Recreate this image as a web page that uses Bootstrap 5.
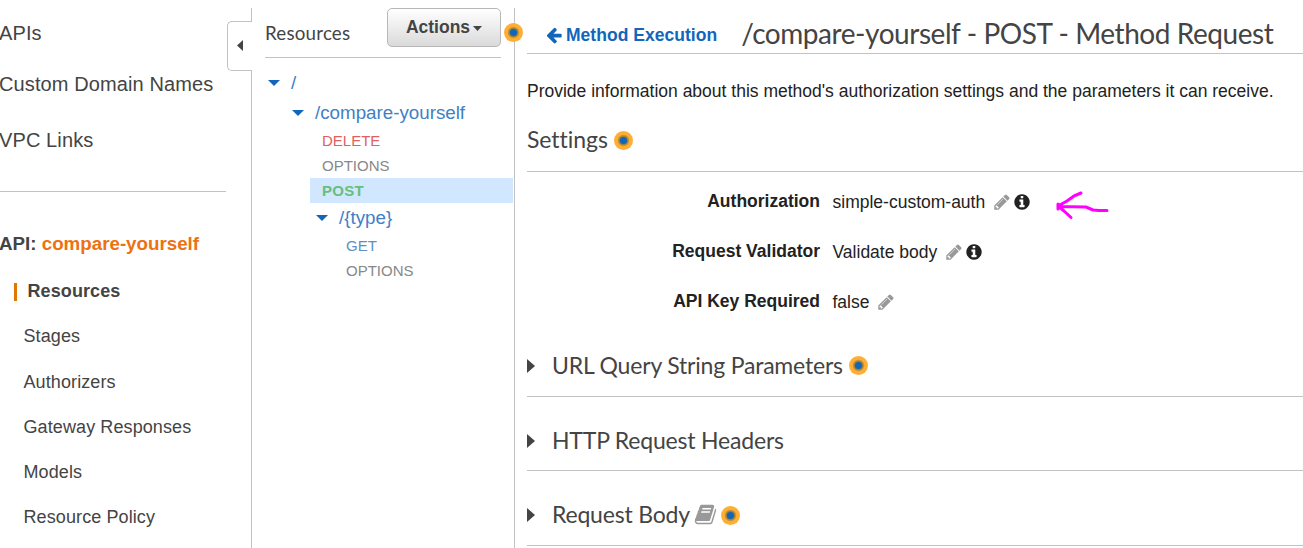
<!DOCTYPE html>
<html lang="en">
<head>
<meta charset="utf-8">
<meta name="viewport" content="width=device-width, initial-scale=1">
<title>Method Request</title>
<link href="https://cdn.jsdelivr.net/npm/bootstrap@5.3.0/dist/css/bootstrap.min.css" rel="stylesheet">
<style>
body{font-family:"Liberation Sans",Arial,sans-serif;font-size:17.5px;color:#222;background:#fff;height:548px;overflow:hidden}
.frame{height:548px;padding-top:8px}
.side{width:252px;border-right:1px solid #c2c2c2;color:#444}
.tree{width:263px;border-right:1px solid #c2c2c2;padding-left:13px}
.side a,.tree a,.pane a{text-decoration:none;white-space:nowrap}
.side a{color:#444}
.top-link{font-size:20px;line-height:24px;letter-spacing:.11px;margin-left:-1px}
.side-rule{width:226px;border-top:1px solid #c2c2c2}
.api-name{font-size:18.75px;line-height:24px;margin-left:-1px;white-space:nowrap}
.api-name a{color:#ec7211}
.sub-link{height:45.25px;line-height:45.25px;padding-left:23.5px;font-size:18px;letter-spacing:.1px}
.sub-link.current{padding-left:14px;display:flex;align-items:center}
.sub-link.current::before{content:"";width:3px;height:18px;background:#e07700;margin-right:10.5px}
.fold{left:227px;top:13px;width:25px;height:50px;background:#fff;border:1px solid #c2c2c2;border-right:0;border-radius:5px 0 0 5px;padding-left:12px}
.lato{font-family:Lato,sans-serif;color:#444}
.tree-head{width:236px;height:50px;border-bottom:1px solid #c2c2c2;margin-bottom:10px}
.tree-title{font-size:18.75px;line-height:24px;margin-top:13px;letter-spacing:.2px}
.btn-actions{width:114px;height:39px;padding:0;font-size:17.5px;font-weight:700;color:#444;border:1px solid #b7b7b7;border-radius:5px;background:linear-gradient(#fff,#dadada);line-height:36px}
.btn-actions:hover{color:#444}
.node{height:30px;font-size:18.75px}
.node a{color:#4180c5}
.node svg{margin-right:12px;flex:none}
.verb{height:25px;line-height:25px;font-size:15px;color:#888;padding-left:12px}
.verb a{color:inherit}
.ml-45{margin-left:45px}.ml-69{margin-left:69px}
.chosen{background:#d0e7ff;width:203px;letter-spacing:.3px}
.dot{width:19px;height:19px;flex:none}
.dot-head{left:504px;top:23px}
.pane{padding-left:12px;min-width:0}
.pane-head{height:46px;border-bottom:1px solid #c2c2c2;padding-left:18px}
.back{color:#1166bb;font-weight:700;line-height:24px;margin-top:15px;letter-spacing:.03px}
.page-title{font-size:28px;line-height:34px;margin:8px 0 0 24px;white-space:nowrap;letter-spacing:-.44px}
.intro{line-height:24px;margin:25px 0 0;white-space:nowrap}
.sect-title{font-size:23px;line-height:30px;margin:0;white-space:nowrap;letter-spacing:-.19px}
.settings-head{height:69px;padding-top:21px;border-bottom:1px solid #c2c2c2}
.field{height:50px}
.field dt{width:293px;text-align:right;margin-right:12.5px;line-height:24px}
.field dd{margin:1px 0 0;line-height:24px;white-space:nowrap}
.panel-row{border-bottom:1px solid #c2c2c2}
.panel-row .sect-title{margin-bottom:2px}
.panel-row .tri{margin-right:17px}
.note{left:1054px;top:188px}
svg{display:block}
</style>
</head>
<body>
<svg width="0" height="0" class="position-absolute">
  <symbol id="dot" viewBox="0 0 19 19"><circle cx="9.500" cy="9.500" r="9.500" fill="#ffae33"/><circle cx="9.500" cy="9.500" r="5.700" fill="#c8922f"/><circle cx="9.500" cy="9.500" r="4.600" fill="#94823f"/><circle cx="9.500" cy="9.500" r="3.600" fill="#1166bb"/></symbol>
  <symbol id="down" viewBox="0 0 12 6"><path d="M0 0H12L6 6Z" fill="#1166bb"/></symbol>
  <symbol id="right" viewBox="0 0 8 14"><path d="M0 0L8 7L0 14Z" fill="#444"/></symbol>
  <symbol id="pencil" viewBox="0 0 1792 1792"><path fill="#999" d="M491 1536l91-91-235-235-91 91v107h128v128h107zm523-928q0-22-22-22-10 0-17 7l-542 542q-7 7-7 17 0 22 22 22 10 0 17-7l542-542q7-7 7-17zm-54-192l416 416-832 832h-416v-416zm683 96q0 53-37 90l-166 166-416-416 166-165q36-38 90-38 53 0 91 38l235 234q37 39 37 91z"/></symbol>
  <symbol id="info" viewBox="0 0 1792 1792"><path fill="#222" d="M1152 1376v-160q0-14-9-23t-23-9h-96v-512q0-14-9-23t-23-9h-320q-14 0-23 9t-9 23v160q0 14 9 23t23 9h96v320h-96q-14 0-23 9t-9 23v160q0 14 9 23t23 9h448q14 0 23-9t9-23zm-128-896v-160q0-14-9-23t-23-9h-192q-14 0-23 9t-9 23v160q0 14 9 23t23 9h192q14 0 23-9t9-23zm640 416q0 209-103 385.500t-279.500 279.500-385.500 103-385.500-103-279.500-279.500-103-385.500 103-385.500 279.500-279.500 385.500-103 385.500 103 279.500 279.500 103 385.500z"/></symbol>
</svg>
<div class="frame d-flex position-relative">
  <nav class="side position-relative flex-shrink-0">
    <a href="#" class="top-link d-block" style="margin-top:13px">APIs</a>
    <a href="#" class="top-link d-block" style="margin-top:27px">Custom Domain Names</a>
    <a href="#" class="top-link d-block" style="margin-top:32px">VPC Links</a>
    <div class="side-rule" style="margin-top:39px"></div>
    <div class="api-name fw-bold" style="margin-top:40px">API: <a href="#">compare-yourself</a></div>
    <div style="margin-top:13px">
      <a href="#" class="sub-link current fw-bold">Resources</a>
      <a href="#" class="sub-link d-block">Stages</a>
      <a href="#" class="sub-link d-block">Authorizers</a>
      <a href="#" class="sub-link d-block">Gateway Responses</a>
      <a href="#" class="sub-link d-block">Models</a>
      <a href="#" class="sub-link d-block">Resource Policy</a>
    </div>
    <div class="fold position-absolute d-flex align-items-center"><svg width="6" height="11" viewBox="0 0 6 11" style="margin:-2px 0 0 -3px"><path d="M6 0V11L0 5.500Z" fill="#444"/></svg></div>
  </nav>

  <section class="tree flex-shrink-0">
    <div class="tree-head d-flex justify-content-between align-items-start">
      <div class="tree-title lato">Resources</div>
      <button type="button" class="btn btn-actions d-flex justify-content-center">Actions<svg width="9" height="5" viewBox="0 0 9 5" style="margin:17px 0 0 3px"><path d="M0 0H9L4.500 5Z" fill="#444"/></svg></button>
    </div>
    <div class="node d-flex align-items-center" style="padding-left:3px"><svg width="12" height="6"><use href="#down"/></svg><a href="#" style="margin-left:-1px">/</a></div>
    <div class="node d-flex align-items-center" style="padding-left:27px"><svg width="12" height="6"><use href="#down"/></svg><a href="#" style="margin-left:-1px">/compare-yourself</a></div>
    <div class="verb ml-45" style="color:#e05f5f"><a href="#">DELETE</a></div>
    <div class="verb ml-45"><a href="#">OPTIONS</a></div>
    <div class="verb ml-45 chosen fw-bold" style="color:#67bf7d"><a href="#">POST</a></div>
    <div class="node d-flex align-items-center" style="padding-left:51px"><svg width="12" height="6"><use href="#down"/></svg><a href="#" style="margin-left:-1px">/{type}</a></div>
    <div class="verb ml-69" style="color:#5b90c4"><a href="#">GET</a></div>
    <div class="verb ml-69"><a href="#">OPTIONS</a></div>
  </section>

  <main class="pane flex-grow-1">
    <div class="pane-head d-flex align-items-start">
      <a href="#" class="back d-flex align-items-center"><svg width="18" height="18" viewBox="0 0 1792 1792" style="margin-right:3px"><path fill="#1166bb" d="M1664 896v128q0 53-32.500 90.500t-84.500 37.500h-704l293 294q38 36 38 90t-38 90l-75 76q-37 37-90 37-52 0-91-37l-651-652q-37-37-37-90 0-52 37-91l651-650q38-38 91-38 52 0 90 38l75 74q38 38 38 91t-38 91l-293 293h704q52 0 84.500 37.500t32.500 90.500z"/></svg><span>Method Execution</span></a>
      <h1 class="page-title lato fw-normal">/compare-yourself - POST - Method Request</h1>
    </div>
    <p class="intro">Provide information about this method's authorization settings and the parameters it can receive.</p>
    <div class="settings-head d-flex align-items-start">
      <h2 class="sect-title lato fw-normal" style="letter-spacing:-.05px">Settings</h2><svg class="dot" style="margin:7px 0 0 6px"><use href="#dot"/></svg>
    </div>
    <dl class="mb-0" style="padding-top:17px">
      <div class="field d-flex"><dt>Authorization</dt><dd>simple-custom-auth</dd><svg width="18" height="18" style="margin:4px 0 0 8px"><use href="#pencil"/></svg><svg width="18" height="18" style="margin:4px 0 0 2px"><use href="#info"/></svg></div>
      <div class="field d-flex"><dt>Request Validator</dt><dd>Validate body</dd><svg width="18" height="18" style="margin:4px 0 0 8px"><use href="#pencil"/></svg><svg width="18" height="18" style="margin:4px 0 0 2px"><use href="#info"/></svg></div>
      <div class="field d-flex"><dt>API Key Required</dt><dd>false</dd><svg width="18" height="18" style="margin:4px 0 0 8px"><use href="#pencil"/></svg></div>
    </dl>
    <div class="panel-row d-flex align-items-center" style="height:58px;padding-bottom:4px"><svg class="tri" width="8" height="14"><use href="#right"/></svg><h2 class="sect-title lato fw-normal">URL Query String Parameters</h2><svg class="dot" style="margin-left:6px"><use href="#dot"/></svg></div>
    <div class="panel-row d-flex align-items-center" style="height:74px;padding-top:14px"><svg class="tri" width="8" height="14"><use href="#right"/></svg><h2 class="sect-title lato fw-normal">HTTP Request Headers</h2></div>
    <div class="panel-row d-flex align-items-center" style="height:75px;padding-top:14px"><svg class="tri" width="8" height="14"><use href="#right"/></svg><h2 class="sect-title lato fw-normal">Request Body</h2><svg width="23" height="23" viewBox="0 0 1792 1792" style="margin-left:4px;margin-top:-2px"><path fill="#999" d="M1703 478q40 57 18 129l-275 906q-19 64-76.500 107.500t-122.500 43.500h-923q-77 0-148.500-53.500t-99.500-131.500q-24-67-2-127 0-4 3-27t4-37q1-8-3-21.500t-3-19.500q2-11 8-21t16.500-23.500 16.500-23.500q23-38 45-91.500t30-91.500q3-10 .5-30t-.5-28q3-11 17-28t17-23q21-36 42-92t25-90q1-9-2.500-32t.5-28q4-13 22-30.500t22-22.500q19-26 42.500-84.500t27.500-96.500q1-8-3-25.500t-2-26.500q2-8 9-18t18-23 17-21q8-12 16.500-30.500t15-35 16-36 19.500-32 26.500-23.500 36-11.500 47.500 5.500l-1 3q38-9 51-9h761q74 0 114 56t18 130l-274 906q-36 119-71.500 153.500t-128.500 34.500h-869q-27 0-38 15-11 16-1 43 24 70 144 70h923q29 0 56-15.500t35-41.500l300-987q7-22 5-57 38 15 59 43zm-1064 2q-4 13 2 22.500t20 9.500h608q13 0 25.500-9.500t16.500-22.500l21-64q4-13-2-22.500t-20-9.500h-608q-13 0-25.500 9.500t-16.500 22.500zm-83 256q-4 13 2 22.500t20 9.500h608q13 0 25.500-9.500t16.500-22.500l21-64q4-13-2-22.500t-20-9.500h-608q-13 0-25.500 9.500t-16.500 22.500z"/></svg><svg class="dot" style="margin-left:4px"><use href="#dot"/></svg></div>
  </main>
  <svg class="dot dot-head position-absolute"><use href="#dot"/></svg>
  <svg class="note position-absolute" width="58" height="34" viewBox="0 0 58 34" fill="none" stroke="#f0f" stroke-width="3" stroke-linecap="round" stroke-linejoin="round"><path d="M27 5L20 8L13 13L4 18L10 23L17 29.500M4 18.500L32 19L39 22L45 22.500H53M4 16V21"/></svg>
</div>
<script src="https://cdn.jsdelivr.net/npm/bootstrap@5.3.0/dist/js/bootstrap.bundle.min.js"></script>
</body>
</html>
